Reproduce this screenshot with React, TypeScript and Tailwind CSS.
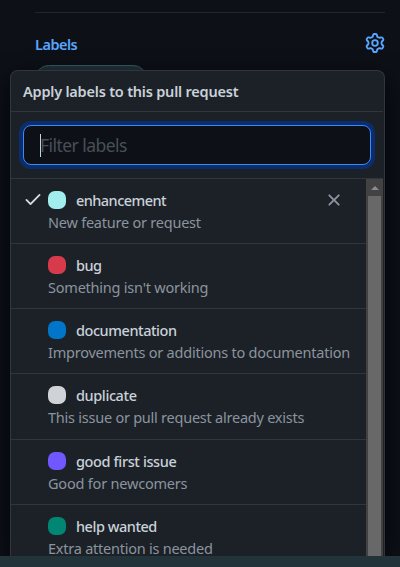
import React from "react";

const GEAR =
  "M8 0a8.2 8.2 0 0 1 .701.031C9.444.095 9.99.645 10.16 1.29l.288 1.107c.018.066.079.158.212.224.231.114.454.243.668.386.123.082.233.09.299.071l1.103-.303c.644-.176 1.392.021 1.82.63.27.385.506.792.704 1.218.315.675.111 1.422-.364 1.891l-.814.806c-.049.048-.098.147-.088.294.016.257.016.515 0 .772-.01.147.038.246.088.294l.814.806c.475.469.679 1.216.364 1.891a7.977 7.977 0 0 1-.704 1.217c-.428.61-1.176.807-1.82.63l-1.102-.302c-.067-.019-.177-.011-.3.071a5.909 5.909 0 0 1-.668.386c-.133.066-.194.158-.211.224l-.29 1.106c-.168.646-.715 1.196-1.458 1.26a8.006 8.006 0 0 1-1.402 0c-.743-.064-1.289-.614-1.458-1.26l-.289-1.106c-.018-.066-.079-.158-.212-.224a5.738 5.738 0 0 1-.668-.386c-.123-.082-.233-.09-.299-.071l-1.103.303c-.644.176-1.392-.021-1.82-.63a8.12 8.12 0 0 1-.704-1.218c-.315-.675-.111-1.422.363-1.891l.815-.806c.05-.048.098-.147.088-.294a6.214 6.214 0 0 1 0-.772c.01-.147-.038-.246-.088-.294l-.815-.806C.635 6.045.431 5.298.746 4.623a7.92 7.92 0 0 1 .704-1.217c.428-.61 1.176-.807 1.82-.63l1.102.302c.067.019.177.011.3-.071.214-.143.437-.272.668-.386.133-.066.194-.158.211-.224l.29-1.106C6.009.645 6.556.095 7.299.03 7.53.01 7.764 0 8 0Zm-.571 1.525c-.036.003-.108.036-.137.146l-.289 1.105c-.147.561-.549.967-.998 1.189-.173.086-.34.183-.5.29-.417.278-.97.423-1.529.27l-1.103-.303c-.109-.03-.175.016-.195.045-.22.312-.412.644-.573.99-.014.031-.021.11.059.19l.815.806c.411.406.562.957.53 1.456a4.709 4.709 0 0 0 0 .582c.032.499-.119 1.05-.53 1.456l-.815.806c-.081.08-.073.159-.059.19.162.346.353.677.573.989.02.03.085.076.195.046l1.102-.303c.56-.153 1.113-.008 1.53.27.161.107.328.204.501.29.447.222.85.629.997 1.189l.289 1.105c.029.109.101.143.137.146a6.6 6.6 0 0 0 1.142 0c.036-.003.108-.036.137-.146l.289-1.105c.147-.561.549-.967.998-1.189.173-.086.34-.183.5-.29.417-.278.97-.423 1.529-.27l1.103.303c.109.029.175-.016.195-.045.22-.313.411-.644.573-.99.014-.031.021-.11-.059-.19l-.815-.806c-.411-.406-.562-.957-.53-1.456a4.709 4.709 0 0 0 0-.582c-.032-.499.119-1.05.53-1.456l.815-.806c.081-.08.073-.159.059-.19a6.464 6.464 0 0 0-.573-.989c-.02-.03-.085-.076-.195-.046l-1.102.303c-.56.153-1.113.008-1.53-.27a4.44 4.44 0 0 0-.501-.29c-.447-.222-.85-.629-.997-1.189l-.289-1.105c-.029-.11-.101-.143-.137-.146a6.6 6.6 0 0 0-1.142 0ZM11 8a3 3 0 1 1-6 0 3 3 0 0 1 6 0ZM9.5 8a1.5 1.5 0 1 0-3.001.001A1.5 1.5 0 0 0 9.5 8Z";
const CHECK =
  "M13.78 4.22a.75.75 0 0 1 0 1.06l-7.25 7.25a.75.75 0 0 1-1.06 0L2.22 9.28a.75.75 0 0 1 1.06-1.06L6 10.94l6.72-6.72a.75.75 0 0 1 1.06 0Z";
const CROSS =
  "M3.72 3.72a.75.75 0 0 1 1.06 0L8 6.94l3.22-3.22a.75.75 0 1 1 1.06 1.06L9.06 8l3.22 3.22a.75.75 0 1 1-1.06 1.06L8 9.06l-3.22 3.22a.75.75 0 0 1-1.06-1.06L6.94 8 3.72 4.78a.75.75 0 0 1 0-1.06Z";

function Icon({ d, className }: { d: string; className: string }) {
  return (
    <svg viewBox="0 0 16 16" fill="currentColor" className={className}>
      <path d={d} />
    </svg>
  );
}

type Label = {
  name: string;
  text: string;
  color: string;
  nameTracking: string;
  textTracking: string;
  height: string;
  selected?: boolean;
};

const LABELS: Label[] = [
  { name: "enhancement", text: "New feature or request", color: "bg-[#a2eeef]", nameTracking: "tracking-[-0.55px]", textTracking: "tracking-[-0.23px]", height: "h-[65px]", selected: true },
  { name: "bug", text: "Something isn't working", color: "bg-[#d73a4a]", nameTracking: "tracking-[-0.5px]", textTracking: "tracking-[-0.22px]", height: "h-[65px]" },
  { name: "documentation", text: "Improvements or additions to documentation", color: "bg-[#0075ca]", nameTracking: "tracking-[-0.45px]", textTracking: "tracking-[-0.23px]", height: "h-[65px]" },
  { name: "duplicate", text: "This issue or pull request already exists", color: "bg-[#cfd3d7]", nameTracking: "tracking-[-0.4px]", textTracking: "tracking-[-0.24px]", height: "h-[66px]" },
  { name: "good first issue", text: "Good for newcomers", color: "bg-[#7057ff]", nameTracking: "tracking-[-0.38px]", textTracking: "tracking-[-0.2px]", height: "h-[65px]" },
  { name: "help wanted", text: "Extra attention is needed", color: "bg-[#008672]", nameTracking: "tracking-[-0.47px]", textTracking: "tracking-[-0.24px]", height: "h-[52px]" },
];

function LabelRow({ label }: { label: Label }) {
  return (
    <div className={`flex shrink-0 border-b border-[#30363d] pt-[11px] last:border-b-0 ${label.height}`}>
      <div className="ml-3 w-[25px] shrink-0">
        {label.selected && <Icon d={CHECK} className="-mt-px size-5 text-[#d0d7de]" />}
      </div>
      <div className="min-w-0 flex-1">
        <div className="flex h-[22px]">
          <span className={`mt-px size-[18px] shrink-0 rounded-[7px] ${label.color}`} />
          <span className={`ml-[10px] text-[14.5px] leading-[21px] font-medium whitespace-nowrap text-[#c9d1d9] ${label.nameTracking}`}>
            {label.name}
          </span>
        </div>
        <div className={`text-[14.5px] leading-[19px] pt-px whitespace-nowrap text-[#8b949e] ${label.textTracking}`}>{label.text}</div>
      </div>
      {label.selected && <Icon d={CROSS} className="mr-[22px] size-5 text-[#8b949e]" />}
    </div>
  );
}

export default function App() {
  return (
    <div className="flex h-[567px] w-[400px] flex-col overflow-hidden bg-[#0d1117] font-['Noto_Sans',sans-serif]">
      <div className="flex h-[556px] shrink-0 flex-col overflow-hidden">
        <div className="mr-[15px] ml-[35px] h-[13px] shrink-0 border-b border-[#21262d]" />
        <div className="mr-[15px] ml-[35px] flex h-[52px] shrink-0 justify-between">
          <span className="pt-[21px] text-[14.5px] leading-[21px] font-semibold tracking-[-0.5px] text-[#58a6ff]">Labels</span>
          <Icon d={GEAR} className="mt-5 size-5 text-[#58a6ff]" />
        </div>
        <div className="ml-[35px] h-[27px] w-[112px] shrink-0 rounded-full border border-[#3d5c60] bg-[#22343a]" />
        <div className="relative z-10 -mt-[22px] ml-[10px] flex h-[486px] w-[375px] shrink-0 flex-col overflow-hidden rounded-t-[8px] border border-b-0 border-[#30363d] bg-[#1c2128] shadow-[0_8px_24px_#010409]">
          <div className="mr-px h-[41px] shrink-0 border-b border-[#30363d] pt-[10px] pl-3 text-[14.5px] leading-[21px] font-semibold tracking-[-0.21px] whitespace-nowrap text-[#c9d1d9]">
            Apply labels to this pull request
          </div>
          <div className="mr-px h-[67px] shrink-0 border-b border-[#30363d] pt-[13px] pl-3">
            <div className="flex h-10 w-[348px] items-center rounded-[8px] border border-[#388bfd] bg-[#0d1117] pl-4 shadow-[0_0_0_4px_#0c2d6b]">
              <span className="h-[23px] w-px bg-[#c9d1d9]" />
              <span className="-ml-px text-[17.5px] leading-[24px] tracking-[-0.55px] text-[#484f58]">Filter labels</span>
            </div>
          </div>
          <div className="flex min-h-0 flex-1">
            <div className="flex w-[355px] shrink-0 flex-col">
              {LABELS.map((label) => (
                <LabelRow key={label.name} label={label} />
              ))}
            </div>
            <div className="flex w-[17px] flex-col bg-[#424242] px-[2px]">
              <div className="flex h-[17px] shrink-0 items-center justify-center">
                <svg viewBox="0 0 8 4" className="mt-px h-1 w-2 text-[#8b8b8b]" fill="currentColor">
                  <path d="M0 4 4 0l4 4z" />
                </svg>
              </div>
              <div className="flex-1 bg-[#686868]" />
            </div>
          </div>
        </div>
      </div>
      <div className="h-[11px] shrink-0 bg-[#22343a]" />
    </div>
  );
}
